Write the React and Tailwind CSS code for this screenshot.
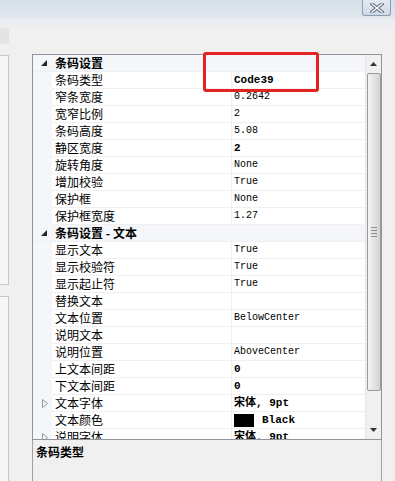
const rows = [
  { type: 'cat', label: '条码设置' },
  { label: '条码类型', value: 'Code39', bold: true },
  { label: '窄条宽度', value: '0.2642' },
  { label: '宽窄比例', value: '2' },
  { label: '条码高度', value: '5.08' },
  { label: '静区宽度', value: '2', bold: true },
  { label: '旋转角度', value: 'None' },
  { label: '增加校验', value: 'True' },
  { label: '保护框', value: 'None' },
  { label: '保护框宽度', value: '1.27' },
  { type: 'cat', label: '条码设置 - 文本' },
  { label: '显示文本', value: 'True' },
  { label: '显示校验符', value: 'True' },
  { label: '显示起止符', value: 'True' },
  { label: '替换文本', value: '' },
  { label: '文本位置', value: 'BelowCenter' },
  { label: '说明文本', value: '' },
  { label: '说明位置', value: 'AboveCenter' },
  { label: '上文本间距', value: '0', bold: true },
  { label: '下文本间距', value: '0', bold: true },
  { label: '文本字体', value: '宋体, 9pt', bold: true, expand: true },
  { label: '文本颜色', value: 'Black', bold: true, swatch: true },
  { label: '说明字体', value: '宋体, 9pt', bold: true, expand: true },
];

const cjk = { fontFamily: '"Noto Sans CJK SC", "Liberation Sans", sans-serif' };
const mono = { fontFamily: '"Liberation Mono", "Noto Sans CJK SC", monospace' };

function CatGlyph() {
  return (
    <svg width="6" height="6" viewBox="0 0 6 6" className="shrink-0">
      <polygon points="6,0 6,6 0,6" fill="#262626" />
    </svg>
  );
}

function ExpandGlyph() {
  return (
    <svg width="6" height="9" viewBox="0 0 6 9" className="shrink-0">
      <polygon points="0.5,0.5 5.5,4.5 0.5,8.5" fill="none" stroke="#9a9a9a" />
    </svg>
  );
}

function Row({ row }) {
  if (row.type === 'cat') {
    return (
      <div className="flex shrink-0 h-[17px] items-center bg-[#f4f6f9] border-b border-[#eef0f3]">
        <div className="w-[19px] flex justify-end pr-[5px]">
          <CatGlyph />
        </div>
        <span className="pl-[3px] text-[12px] font-bold leading-none text-black" style={cjk}>
          {row.label}
        </span>
      </div>
    );
  }
  return (
    <div className="flex shrink-0 h-[17px]">
      <div className="w-[19px] bg-[#f4f6f9] flex items-center justify-end pr-[4px]">
        {row.expand && <ExpandGlyph />}
      </div>
      <div className="w-[180px] flex items-center pl-[3px] border-b border-r border-[#f0f0f0] bg-white">
        <span className="text-[12px] leading-none text-black" style={cjk}>
          {row.label}
        </span>
      </div>
      <div className="flex-1 flex items-center pl-[2px] border-b border-[#f0f0f0] bg-white">
        {row.swatch && <span className="w-[20px] h-[13px] bg-black mr-[8px] shrink-0" />}
        <span
          className={`leading-none text-black ${row.bold ? 'text-[11px] font-bold' : 'text-[10px]'}`}
          style={mono}
        >
          {row.value}
        </span>
      </div>
    </div>
  );
}

function Scrollbar() {
  return (
    <div className="w-[16px] bg-[#f0f0f0] border-l border-[#e6e6e6] flex flex-col items-center">
      <div className="h-[18px] flex items-center justify-center">
        <svg width="7" height="4" viewBox="0 0 7 4">
          <polygon points="3.5,0 7,4 0,4" fill="#333" />
        </svg>
      </div>
      <div className="w-[14px] h-[318px] rounded-[2px] border border-[#9b9b9b] bg-gradient-to-r from-[#f4f4f4] via-[#e4e4e4] to-[#d2d2d2] flex items-center justify-center">
        <div className="flex flex-col gap-[2px]">
          <div className="w-[6px] h-px bg-[#8a8a8a]" />
          <div className="w-[6px] h-px bg-[#8a8a8a]" />
          <div className="w-[6px] h-px bg-[#8a8a8a]" />
          <div className="w-[6px] h-px bg-[#8a8a8a]" />
        </div>
      </div>
      <div className="flex-1" />
      <div className="h-[18px] flex items-center justify-center">
        <svg width="7" height="4" viewBox="0 0 7 4">
          <polygon points="0,0 7,0 3.5,4" fill="#333" />
        </svg>
      </div>
    </div>
  );
}

export default function App() {
  return (
    <div className="relative w-[395px] h-[481px] overflow-hidden bg-[#f0f0f0]" style={cjk}>
      <div className="h-[18px] bg-gradient-to-b from-[#d6dfe9] to-[#dfe6ee] flex justify-end pr-[4px]">
        <div className="w-[29px] h-[16px] rounded-b-[3px] border border-t-0 border-[#8d9db3] bg-gradient-to-b from-[#e3eaf2] to-[#cfd9e5] flex items-center justify-center">
          <svg width="14" height="10" viewBox="0 0 14 10">
            <path d="M2 1 L12 9 M12 1 L2 9" stroke="#5c6a7c" strokeWidth="3.4" strokeLinecap="square" />
            <path d="M2 1 L12 9 M12 1 L2 9" stroke="#ffffff" strokeWidth="1.4" strokeLinecap="square" />
          </svg>
        </div>
      </div>
      <div className="h-[10px] bg-gradient-to-b from-[#e8ecf1] to-[#eeeff1]" />
      <div className="flex h-[453px]">
        <div className="w-[9px] flex flex-col">
          <div className="h-[16px] bg-[#e4e4e4]" />
          <div className="h-[11px]" />
          <div className="h-[230px] bg-[#f7f7f7] border border-l-0 border-[#c8c8c8]" />
          <div className="h-[11px]" />
          <div className="flex-1 bg-[#f7f7f7] border border-l-0 border-b-0 border-[#c8c8c8]" />
        </div>
        <div className="w-[23px]" />
        <div className="w-[350px] flex flex-col pt-[26px]">
          <div className="h-[386px] shrink-0 border border-[#8f959c] bg-white flex overflow-hidden">
            <div className="flex-1 flex flex-col overflow-hidden">
              {rows.map((r, i) => (
                <Row key={i} row={r} />
              ))}
            </div>
            <Scrollbar />
          </div>
          <div className="flex-1 border border-t-0 border-b-0 border-[#a0a0a0] bg-[#f0f0f0] px-[3px] pt-[5px]">
            <span className="block text-[12px] font-bold leading-[14px] text-black">条码类型</span>
          </div>
        </div>
      </div>
      <div className="absolute left-[203px] top-[52px] w-[116px] h-[40px] rounded-[3px] border-[3px] border-[#e3231f]" />
    </div>
  );
}
